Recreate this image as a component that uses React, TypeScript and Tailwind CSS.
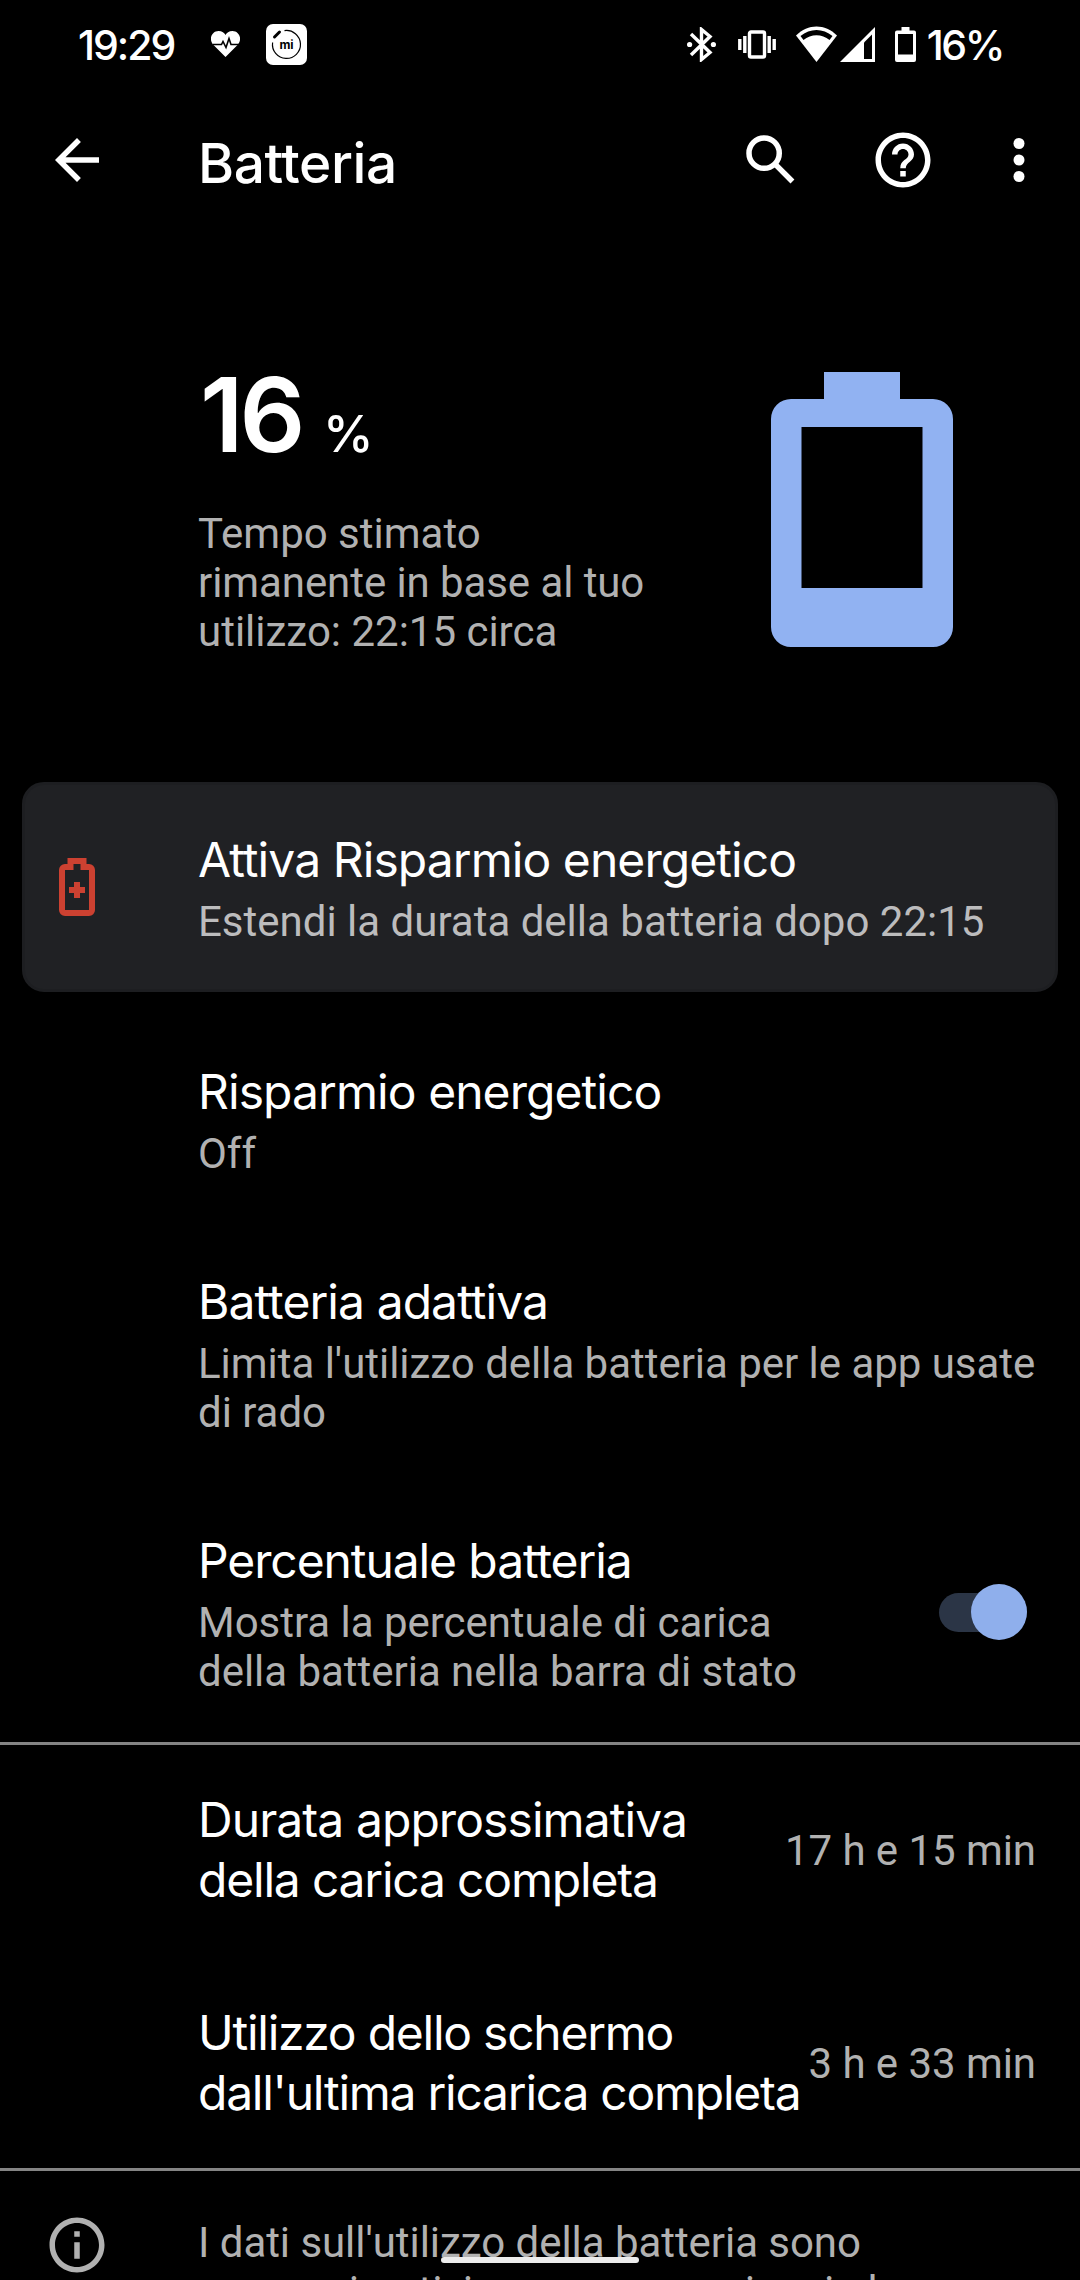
import type { ReactNode } from 'react';

const SettingRow = ({
  title,
  summary,
  value,
  className = '',
  tracking = 'tracking-[-0.93px]',
  children,
}: {
  title: ReactNode;
  summary?: ReactNode;
  value?: string;
  className?: string;
  tracking?: string;
  children?: ReactNode;
}) => {
  return (
    <div className={`flex items-center justify-between pl-[198px] pr-11 ${className}`}>
      <div className="flex flex-col gap-[7px] whitespace-nowrap">
        <h2 className={`font-[Inter,sans-serif] text-[48px] leading-[60px] text-white ${tracking}`}>{title}</h2>
        {summary && <p className="text-[42px] leading-[49px] tracking-[-0.03px] text-[#b1b1b1]">{summary}</p>}
      </div>
      {value && <span className="whitespace-nowrap text-[42px] leading-[49px] tracking-[-0.05px] text-[#b1b1b1]">{value}</span>}
      {children}
    </div>
  );
};

const StatusBar = () => {
  return (
    <div className="flex h-[88px] items-center pl-[78px] pr-[77px] font-[Inter,sans-serif] text-[41px] font-medium leading-[50px]">
      <span className="w-[133px] pt-px tracking-[-2px]">19:29</span>

      {/* Heart rate */}
      <svg className="h-[26px] w-[29px]" viewBox="0 0 29 26">
        <path d="M14.5 26 2.5 14C-3 8 1 0 7.5 0 11 0 13.5 2 14.5 4 15.5 2 18 0 21.5 0 28 0 32 8 26.5 14Z" fill="#fff" />
        <path d="M2 13.5h8.5l1.5-3 3 6 3-9 2 6H28" fill="none" stroke="#000" strokeWidth="1.6" />
      </svg>

      {/* Mi Fit */}
      <svg className="ml-[26px] h-[41px] w-[41px]" viewBox="0 0 41 41">
        <rect width="41" height="41" rx="7" fill="#fff" />
        <path d="M18.5 6.6A14 14 0 1 1 6.6 18.5" fill="none" stroke="#000" strokeWidth="1.2" />
        <path d="m8.5 13 5-5" stroke="#000" strokeWidth="3" strokeLinecap="round" />
        <text x="20.5" y="24.5" textAnchor="middle" className="text-[12px] font-bold">
          mi
        </text>
      </svg>

      <div className="ml-auto flex items-center">
        {/* Bluetooth */}
        <svg className="h-[35px] w-[29px]" viewBox="0 0 29 35">
          <path d="m4 7 19 18.5-8.5 7V2.5l8.5 7L4 28" fill="none" stroke="#fff" strokeWidth="3.4" />
          <circle cx="2.6" cy="17.5" r="2.6" fill="#fff" />
          <circle cx="26.4" cy="17.5" r="2.6" fill="#fff" />
        </svg>
        {/* Vibrate */}
        <svg className="ml-[22px] h-[29px] w-[38px]" viewBox="0 0 38 29">
          <rect x="11.5" y="2" width="15" height="25" rx="1.5" fill="none" stroke="#fff" strokeWidth="3.4" />
          <path d="M1.8 9v11M6.8 6v17M31.2 6v17M36.2 9v11" stroke="#fff" strokeWidth="3.4" />
        </svg>
        {/* Wifi */}
        <svg className="ml-5 h-[36px] w-[41px]" viewBox="0 0 41 36">
          <path d="M20.5 36 0 9.5C12-2.5 29-2.5 41 9.5Z" fill="#fff" />
          <path d="M4.5 10C14 2 27 2 36.5 10L33.5 14C26 7.5 15 7.5 7.5 14Z" fill="#000" />
        </svg>
        {/* Mobile signal */}
        <svg className="ml-[3px] h-[35px] w-[35px]" viewBox="0 0 35 35">
          <path d="M35 0v35H0Z" fill="#fff" />
          <path d="M24 15.5 32 7.5V32h-8Z" fill="#000" />
        </svg>
        {/* Battery */}
        <svg className="ml-5 h-[35px] w-[21px]" viewBox="0 0 21 35">
          <path d="M6.5 0h8v3.5H19a2 2 0 0 1 2 2V33a2 2 0 0 1-2 2H2a2 2 0 0 1-2-2V5.5a2 2 0 0 1 2-2h4.5Z" fill="#fff" />
          <path d="M3 7h15v20.5H3Z" fill="#000" />
        </svg>
        <span className="ml-[11px] pt-px tracking-[-2.4px]">16%</span>
      </div>
    </div>
  );
};

const Toolbar = () => {
  return (
    <header className="flex h-[144px] items-center pl-[44px] pr-[28px] text-white">
      <svg className="h-[66px] w-[66px]" viewBox="0 0 24 24" fill="currentColor">
        <path d="M20 11H7.83l5.59-5.59L12 4l-8 8 8 8 1.41-1.41L7.83 13H20v-2z" />
      </svg>
      <h1 className="ml-[88px] pt-[5px] font-[Inter,sans-serif] text-[55px] font-medium leading-[66px] tracking-[-0.4px]">Batteria</h1>
      <svg className="ml-auto h-[66px] w-[66px]" viewBox="0 0 24 24" fill="none" stroke="currentColor" strokeWidth="2">
        <circle cx="9.5" cy="9.5" r="5.5" />
        <path d="m13.4 13.4 6.4 6.4" />
      </svg>
      <svg className="ml-[66px] h-[66px] w-[66px]" viewBox="0 0 24 24" fill="currentColor">
        <path d="M11 18h2v-2h-2v2zm1-16C6.48 2 2 6.48 2 12s4.48 10 10 10 10-4.48 10-10S17.52 2 12 2zm0 18c-4.41 0-8-3.59-8-8s3.59-8 8-8 8 3.59 8 8-3.59 8-8 8zm0-14c-2.21 0-4 1.79-4 4h2c0-1.1.9-2 2-2s2 .9 2 2c0 2-3 1.75-3 5h2c0-2.25 3-2.5 3-5 0-2.21-1.79-4-4-4z" />
      </svg>
      <svg className="ml-[50px] h-[66px] w-[66px]" viewBox="0 0 24 24" fill="currentColor">
        <circle cx="12" cy="6" r="2" />
        <circle cx="12" cy="12" r="2" />
        <circle cx="12" cy="18" r="2" />
      </svg>
    </header>
  );
};

const BatterySummary = () => {
  return (
    <section className="flex h-[550px] items-start justify-between pl-[198px] pr-[127px] pt-[133px]">
      <div>
        <div className="flex items-baseline pl-[2px] font-[Inter,sans-serif] font-medium leading-[100px] text-white">
          <span className="w-[123px] text-[103px] font-semibold tracking-[-4px]">16</span>
          <span className="text-[51px]">%</span>
        </div>
        <p className="mt-[25px] text-[42px] leading-[49px] text-[#b1b1b1]">
          Tempo stimato
          <br />
          <span className="tracking-[-0.08px]">rimanente in base al tuo</span>
          <br />
          utilizzo: 22:15 circa
        </p>
      </div>
      <svg className="mt-[7px] h-[275px] w-[182px]" viewBox="0 0 182 275">
        <path
          d="M53 0h76v27h33a20 20 0 0 1 20 20v208a20 20 0 0 1-20 20H20a20 20 0 0 1-20-20V47a20 20 0 0 1 20-20h33ZM30.5 55v161h121V55Z"
          fill="#91b2f2"
          fillRule="evenodd"
        />
      </svg>
    </section>
  );
};

const SaverCard = () => {
  return (
    <section className="mx-[22px] flex h-[210px] items-center rounded-[22px] border-[3px] border-[#1d1e21] bg-[#202124] pl-[34px]">
      <svg className="h-[58px] w-[36px]" viewBox="0 0 36 58" fill="none" stroke="#cc4131" strokeWidth="6">
        <path d="M11.5 9V3h13v6H30a3 3 0 0 1 3 3v40a3 3 0 0 1-3 3H6a3 3 0 0 1-3-3V12a3 3 0 0 1 3-3Z" />
        <path d="M18 24v16M10 32h16" />
      </svg>
      <div className="ml-[103px] flex flex-col gap-[7px] whitespace-nowrap pt-px">
        <h2 className="font-[Inter,sans-serif] text-[48px] leading-[60px] tracking-[-0.93px] text-white">Attiva Risparmio energetico</h2>
        <p className="text-[42px] leading-[49px] text-[#bcbcbd]">Estendi la durata della batteria dopo 22:15</p>
      </div>
    </section>
  );
};

const App = () => {
  return (
    <div className="relative h-[2280px] w-[1080px] overflow-hidden bg-black font-[Roboto,sans-serif] text-white">
      <StatusBar />
      <Toolbar />
      <BatterySummary />
      <SaverCard />

      <main className="pt-[23px]">
        <SettingRow className="h-[210px]" title="Risparmio energetico" summary="Off" />
        <SettingRow
          className="h-[259px]"
          title="Batteria adattiva"
          summary={
            <>
              Limita l'utilizzo della batteria per le app usate
              <br />
              di rado
            </>
          }
        />
        <SettingRow
          className="h-[258px]"
          tracking="tracking-[-1.1px]"
          title="Percentuale batteria"
          summary={
            <>
              Mostra la percentuale di carica
              <br />
              della batteria nella barra di stato
            </>
          }
        >
          <button role="switch" aria-checked="true" className="mb-[2px] mr-[9px] flex h-[39px] w-[88px] items-center justify-end rounded-full bg-[#2b3546]">
            <span className="h-[56px] w-[56px] shrink-0 rounded-full bg-[#8fafec]" />
          </button>
        </SettingRow>

        <div className="border-y-[3px] border-[#848484]">
          <SettingRow
            className="h-[211px] pb-px"
            title={
              <>
                Durata approssimativa
                <br />
                <span className="tracking-[-1.2px]">della carica completa</span>
              </>
            }
            value="17 h e 15 min"
          />
          <SettingRow
            className="h-[212px] pt-[2px]"
            tracking="tracking-[-1.25px]"
            title={
              <>
                Utilizzo dello schermo
                <br />
                dall'ultima ricarica completa
              </>
            }
            value="3 h e 33 min"
          />
        </div>
      </main>

      <footer className="flex items-start pl-[44px] pt-[47px]">
        <svg className="-mt-[6px] h-[66px] w-[66px]" viewBox="0 0 24 24" fill="#b1b1b1">
          <path d="M11 7h2v2h-2zm0 4h2v6h-2zm1-9C6.48 2 2 6.48 2 12s4.48 10 10 10 10-4.48 10-10S17.52 2 12 2zm0 18c-4.41 0-8-3.59-8-8s3.59-8 8-8 8 3.59 8 8-3.59 8-8 8z" />
        </svg>
        <p className="ml-[88px] whitespace-nowrap text-[42px] leading-[49px] tracking-[-0.05px] text-[#b1b1b1]">
          I dati sull'utilizzo della batteria sono
          <br />
          approssimativi e possono variare in base
        </p>
      </footer>

      {/* Gesture bar */}
      <div className="absolute left-[441px] top-[2257px] h-[6px] w-[198px] rounded-full bg-[#ececec]" />
    </div>
  );
};

export default App;
